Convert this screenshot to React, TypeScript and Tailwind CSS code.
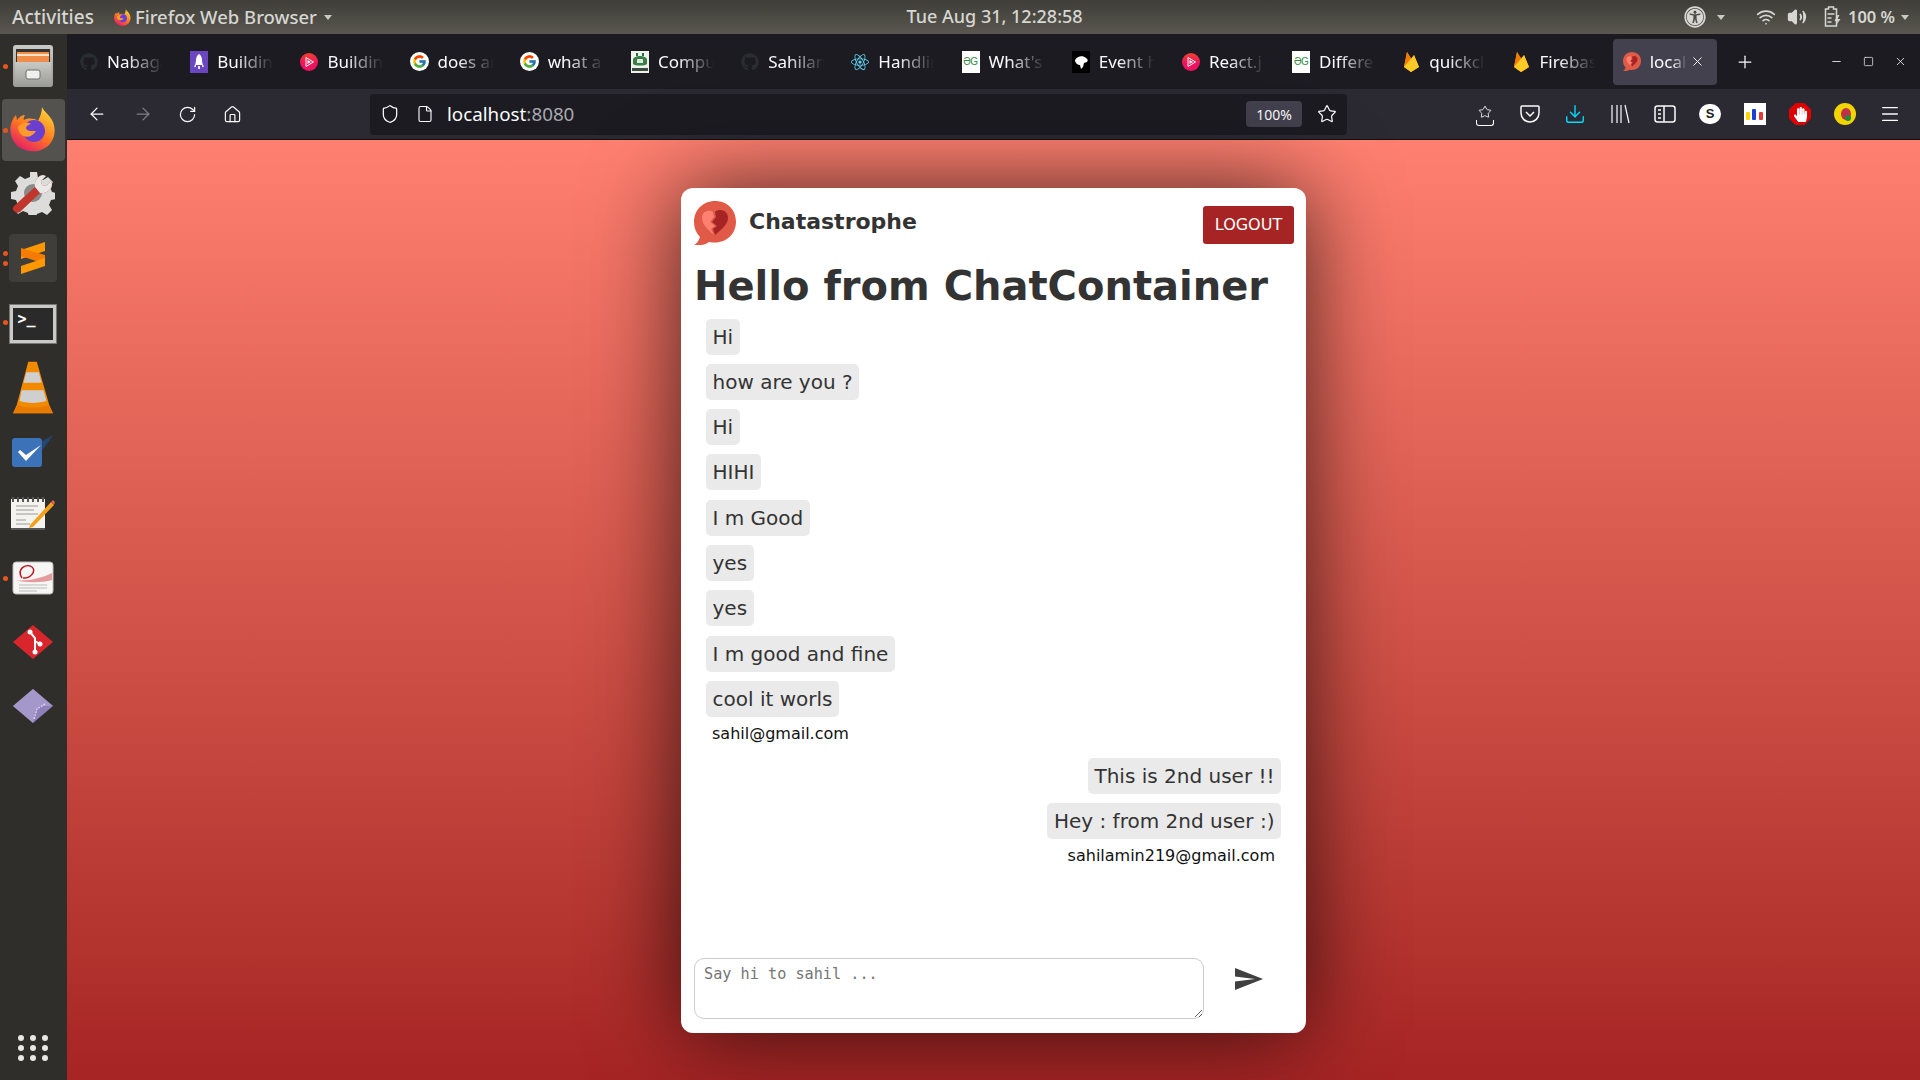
import { ArrowLeft, ArrowRight, RotateCw, Home, Shield, File, Star, Plus, X, Minus, Square, Menu, Download, Wifi, Volume2 } from 'lucide-react'
import { FaGithub, FaReact, FaHandPaper, FaUniversalAccess } from 'react-icons/fa'
import { FcGoogle } from 'react-icons/fc'

const UI_FONT = 'font-["Noto_Sans",sans-serif]'

function ChatLogo({ width, height }: { width: number; height: number }) {
  return (
    <svg width={width} height={height} viewBox="4 2 42 44">
      <path d="M25 2C13 2 4 11 4 23c0 6 2 11 6 15-1 4-4 7-6 8 5 1 11 0 15-3 2 .4 4 .6 6 .6 12 0 21-9 21-21S37 2 25 2z" fill="#e05a47" />
      <path d="M23 13c-4-3-11-1-11 6 0 6 6 12 12 17l-3-6 4-3-5-4 4-5z" fill="#ff8070" />
      <path d="M25 13c4-4 13-2 13 6 0 6-7 12-13 17l-2-6 4-3-5-4 4-5z" fill="#a62424" />
    </svg>
  )
}

function PlayCircle() {
  return (
    <svg width="18" height="18" viewBox="0 0 18 18">
      <defs>
        <linearGradient id="play" x1="0.500" y1="0" x2="0.500" y2="1">
          <stop offset="0" stopColor="#f0412f" />
          <stop offset="0.600" stopColor="#f0115f" />
        </linearGradient>
      </defs>
      <circle cx="9" cy="9" r="9" fill="url(#play)" />
      <path d="M6 4.500v9L13.500 9z" fill="none" stroke="#fff" strokeWidth="1" />
      <path d="M7.500 7v4L11 9z" fill="#fff" />
    </svg>
  )
}

function RocketIcon() {
  return (
    <svg width="18" height="22" viewBox="0 0 18 22">
      <rect width="18" height="22" fill="#6b46c1" />
      <path d="M9 3c3 2 3.500 6 3 11H6C5.500 9 6 5 9 3z" fill="#fff" />
      <path d="M6 11l-2 5h2zM12 11l2 5h-2zM8 15h2v3H8z" fill="#e9e3f7" />
    </svg>
  )
}

function GfgIcon() {
  return (
    <span className='flex h-[22px] w-[18px] items-center justify-center bg-white font-["Liberation_Sans",sans-serif] text-[10px] font-normal tracking-[-0.5px] text-[#2f8d46]'>
      ƏG
    </span>
  )
}

function OhioIcon() {
  return (
    <svg width="18" height="22" viewBox="0 0 18 22">
      <rect width="18" height="22" fill="#eef2ec" />
      <path d="M5 2h2v3H5zM11 2h2v3h-2z" fill="#2c6b3a" />
      <path d="M2 9c0-3 4-4 7-4s7 1 7 4v4c-2 2-12 2-14 0z" fill="#3b7d49" />
      <rect x="6" y="8" width="6" height="4" fill="#dfe8dc" />
      <rect x="1" y="17" width="16" height="3" fill="#3a4d3e" />
    </svg>
  )
}

function EventIcon() {
  return (
    <svg width="18" height="22" viewBox="0 0 18 22">
      <rect width="18" height="22" fill="#000" />
      <path d="M3 9c2-4 8-5 11-2 2 1 2 3 1 4l-3 1-1 4-2 2-1-4c-2 0-5-2-5-5z" fill="#fff" />
    </svg>
  )
}

function FirebaseIcon() {
  return (
    <svg width="18" height="22" viewBox="0 0 18 22">
      <path d="M2 16L5 1l5 8 2-5 5 12-8 5z" fill="#ffa000" />
      <path d="M2 16L5 1l5 8z" fill="#f57c00" />
      <path d="M2 16l10-12 5 12-8 5z" fill="#ffca28" />
    </svg>
  )
}

const tabs = [
  { title: 'Nabaga', icon: <FaGithub size={18} color="#2a2e33" /> },
  { title: 'Building', icon: <RocketIcon /> },
  { title: 'Building', icon: <PlayCircle /> },
  { title: 'does an', icon: <GoogleIcon /> },
  { title: 'what a', icon: <GoogleIcon /> },
  { title: 'Compu', icon: <OhioIcon /> },
  { title: 'Sahilan', icon: <FaGithub size={18} color="#2a2e33" /> },
  { title: 'Handlin', icon: <FaReact size={18} color="#61dafb" /> },
  { title: "What's", icon: <GfgIcon /> },
  { title: 'Event h', icon: <EventIcon /> },
  { title: 'React.j', icon: <PlayCircle /> },
  { title: 'Differe', icon: <GfgIcon /> },
  { title: 'quickcl', icon: <FirebaseIcon /> },
  { title: 'Firebas', icon: <FirebaseIcon /> },
]

function GoogleIcon() {
  return (
    <span className="flex h-[19px] w-[19px] items-center justify-center rounded-full bg-white">
      <FcGoogle size={15} />
    </span>
  )
}

function FilesIcon() {
  return (
    <svg width="42" height="44" viewBox="0 0 42 44">
      <defs>
        <linearGradient id="cab" x1="0" y1="0" x2="0" y2="1">
          <stop offset="0" stopColor="#c9c9c6" />
          <stop offset="1" stopColor="#9a9a97" />
        </linearGradient>
      </defs>
      <rect x="1" y="1" width="40" height="42" rx="3" fill="url(#cab)" />
      <rect x="4" y="5" width="34" height="14" fill="#36322d" />
      <rect x="5" y="8" width="32" height="10" fill="#f28c4a" />
      <rect x="5" y="10" width="32" height="2" fill="#fce3c7" />
      <rect x="3" y="18" width="36" height="25" fill="url(#cab)" />
      <rect x="14" y="26" width="14" height="9" rx="2" fill="#efefed" stroke="#6e6e6b" />
    </svg>
  )
}

function FirefoxIcon({ size }: { size: number }) {
  const id = size > 20 ? 'ffBig' : 'ffSmall'
  return (
    <svg width={size} height={size} viewBox="0 0 46 46">
      <defs>
        <linearGradient id={id} x1="0.800" y1="0" x2="0.200" y2="1">
          <stop offset="0" stopColor="#ffd83a" />
          <stop offset="0.500" stopColor="#ff7a1f" />
          <stop offset="1" stopColor="#e3166f" />
        </linearGradient>
      </defs>
      <path d="M32 1c2 5 8 8 11 15 3 8 2 17-4 23-8 8-21 8-30 2C2 36-1 27 1 18c1-4 3-7 5-9l1 5c2-3 5-5 8-5-1 2-2 4-1 5 4-2 10-2 14 1 2-4 4-9 4-14z" fill={`url(#${id})`} />
      <circle cx="24" cy="25" r="11" fill="#6a3fd0" />
      <path d="M8 21c4-5 10-5 13-3-3 1-5 2-5 4 1 4 7 3 10 3-3 5-8 7-13 5-3-2-5-5-5-9z" fill="#ff9a2e" />
    </svg>
  )
}

function ToolsIcon() {
  return (
    <svg width="44" height="44" viewBox="0 0 44 44">
      <path d="M19 1h7l1 6 5 2 5-3 5 5-3 5 2 5 4 1v6l-5 1-2 5 3 5-5 5-5-3-5 2-1 3h-7l-1-4-5-2-5 3-3-4 3-5-2-5-5-1v-7l5-1 2-5-3-5 5-5 5 3 5-2z" fill="#dcdcda" />
      <circle cx="22" cy="22" r="9" fill="#8a8a88" />
      <path d="M3 40c-2-2-1-4 0-5l21-19c-1-5 2-11 8-12l3 1-5 5 1 4 4 1 5-5 1 3c0 6-6 10-12 9L9 41c-2 1-4 1-6-1z" fill="#c0362c" />
      <path d="M24 16c-1-5 2-11 8-12l3 1-5 5 1 4 4 1 5-5 1 3c0 6-6 10-12 9z" fill="#e8e8e6" />
    </svg>
  )
}

function SublimeIcon() {
  return (
    <span className="flex h-[48px] w-[48px] items-center justify-center rounded-[4px] bg-[#3f3e3b]">
      <svg width="26" height="32" viewBox="0 0 26 32">
        <path d="M25 0v9L1 17V8z" fill="#ff9800" />
        <path d="M1 14l24 8v-9L1 6z" fill="#f57c00" />
        <path d="M1 24l24-8v8L1 32z" fill="#ff9800" />
      </svg>
    </span>
  )
}

function TerminalIcon() {
  return (
    <span className="flex h-[38px] w-[46px] items-start border-[3px] border-[#c9c9c7] bg-[#2a2a2a] px-[5px] pt-[1px] font-['DejaVu_Sans_Mono',monospace] text-[15px] font-bold leading-[20px] text-white outline outline-[1px] outline-[#777]">
      &gt;_
    </span>
  )
}

function VlcIcon() {
  return (
    <svg width="40" height="55" viewBox="0 0 42 56">
      <path d="M16 1h9l13 45 4 9H0l4-9z" fill="#f28a00" />
      <path d="M14 12h13l3 11H11zM9 31h23l3 11c-7 3-22 3-28 0z" fill="#cfcfcf" />
      <path d="M0 55l5-9c7 4 25 4 32 0l5 9z" fill="#e87a00" />
    </svg>
  )
}

function CheckIcon() {
  return (
    <svg width="44" height="34" viewBox="0 0 44 34">
      <path d="M28 8l14-8-8 12-5 4z" fill="#27456f" />
      <rect x="1" y="3" width="30" height="29" rx="3" fill="#3c72b8" />
      <path d="M7 17l2-2 6 5 15-10-15 16z" fill="#fff" />
    </svg>
  )
}

function NotesIcon() {
  return (
    <svg width="46" height="34" viewBox="0 0 46 34">
      <rect x="1" y="3" width="34" height="30" fill="#f4f3ee" />
      <rect x="1" y="32" width="34" height="2" fill="#555" />
      <path d="M3 1v5M8 1v5M13 1v5M18 1v5M23 1v5M28 1v5M33 1v5" stroke="#555" strokeWidth="2" />
      <path d="M6 10h22M6 14h18M6 18h22M6 24h10M6 28h14" stroke="#9a9a98" strokeWidth="1" />
      <path d="M20 29l-1 3 4-1L44 9l-3-3z" fill="#f4a01c" />
      <path d="M41 6l2-2 2 2-1 3z" fill="#e05a5a" />
    </svg>
  )
}

function EvinceIcon() {
  return (
    <svg width="42" height="34" viewBox="0 0 42 34">
      <rect x="1" y="1" width="40" height="32" rx="3" fill="#f6f6f4" stroke="#bbb" />
      <path d="M2 19c12 2 28-2 38-7v7c-10 3-26 3-38 0z" fill="#e59a9c" />
      <path d="M10 17C4 8 14 2 20 6c5 4-2 12-9 11" fill="none" stroke="#cc0f1a" strokeWidth="1.500" />
      <path d="M7 24h28M7 27h28M7 30h18" stroke="#bbb" />
    </svg>
  )
}

function GitIcon() {
  return (
    <svg width="42" height="34" viewBox="0 0 42 34">
      <path d="M21 0l20 17-20 17L1 17z" fill="#d9252c" />
      <path d="M18 7l5 6v13M23 16l5 3" stroke="#fff" strokeWidth="2" fill="none" />
      <circle cx="18" cy="7" r="2.500" fill="#fff" />
      <circle cx="28" cy="19" r="2.500" fill="#fff" />
      <circle cx="23" cy="27" r="2.500" fill="#fff" />
    </svg>
  )
}

function DiamondIcon() {
  return (
    <svg width="42" height="34" viewBox="0 0 42 34">
      <path d="M21 0l20 17-20 17L1 17z" fill="#8f80ba" />
      <path d="M21 0l20 17H28l-5 5-2 12L1 17z" fill="#b3a7d6" opacity="0.600" />
      <path d="M22 30l3-10 8-5" stroke="#d5cfe8" strokeWidth="1.500" fill="none" strokeDasharray="2 1" />
    </svg>
  )
}

const dockItems = [
  { icon: <FilesIcon />, dots: 1, shift: '' },
  { icon: <FirefoxIcon size={46} />, dots: 1, active: true, shift: '-mt-[3px]' },
  { icon: <ToolsIcon />, dots: 0, shift: '-mt-[3px]' },
  { icon: <SublimeIcon />, dots: 2, shift: '' },
  { icon: <TerminalIcon />, dots: 1, shift: 'mt-[3px]' },
  { icon: <VlcIcon />, dots: 0, shift: 'mt-[2px]' },
  { icon: <CheckIcon />, dots: 0, shift: 'mt-[3px]' },
  { icon: <NotesIcon />, dots: 0, shift: '-mt-[2px]' },
  { icon: <EvinceIcon />, dots: 1, shift: '-mt-[1px]' },
  { icon: <GitIcon />, dots: 0, shift: '-mt-[1px]' },
  { icon: <DiamondIcon />, dots: 0, shift: '-mt-[1px]' },
]

function Dock() {
  return (
    <aside className="flex w-[67px] shrink-0 flex-col bg-[#302e2b]">
      {dockItems.map((item, i) => (
        <div key={i} className="relative flex h-[64px] shrink-0 items-center justify-center pr-[2px]">
          {item.active && <div className="absolute inset-x-[2px] inset-y-[1px] rounded-[4px] bg-[#54524e]" />}
          <div className={`relative flex items-center justify-center ${item.shift}`}>{item.icon}</div>
          {item.dots > 0 && (
            <div className="absolute left-[3px] top-0 flex h-full flex-col justify-center gap-[5px]">
              {Array.from({ length: item.dots }).map((_, d) => (
                <span key={d} className="h-[5px] w-[5px] rounded-full bg-[#e95420]" />
              ))}
            </div>
          )}
        </div>
      ))}
      <div className="mb-[19px] mt-auto grid grid-cols-3 justify-items-center gap-x-[6px] gap-y-[4px] self-center pr-[2px]">
        {Array.from({ length: 9 }).map((_, i) => (
          <span key={i} className="h-[6px] w-[6px] rounded-full bg-[#e8e8e6]" />
        ))}
      </div>
    </aside>
  )
}

function TopBar() {
  return (
    <header className={`relative flex h-[34px] shrink-0 items-center justify-between bg-gradient-to-b from-[#3e3d38] to-[#59574e] pl-[12px] pr-[11px] text-[18px] font-medium text-[#d6d6d2] ${UI_FONT}`}>
      <div className="flex items-center">
        <span className="text-[19px]">Activities</span>
        <span className="ml-[20px] flex items-center gap-[4px] text-[18.500px]">
          <FirefoxIcon size={17} />
          Firefox Web Browser
          <span className="ml-[3px] h-0 w-0 border-x-[4px] border-t-[5px] border-x-transparent border-t-[#c9c9c5]" />
        </span>
      </div>
      <span className="absolute left-[51.800%] top-[3px] -translate-x-1/2">Tue Aug 31, 12:28:58</span>
      <div className="flex items-center">
        <FaUniversalAccess size={22} color="#d6d6d2" />
        <span className="ml-[11px] h-0 w-0 border-x-[4px] border-t-[5px] border-x-transparent border-t-[#c9c9c5]" />
        <Wifi size={20} className="ml-[31px]" />
        <Volume2 size={20} className="ml-[11px]" fill="#d6d6d2" />
        <svg width="18" height="22" viewBox="0 0 17 22" className="ml-[16px]" fill="none" stroke="#d6d6d2" strokeWidth="1.500">
          <path d="M5 1h5v2h3v17H2V3h3zM4 8h7M4 12h4M4 16h4" />
          <path d="M14 9l-3 6h3l-2 5 5-7h-3l2-4z" fill="#d6d6d2" stroke="none" />
        </svg>
        <span className="ml-[7px] text-[16.500px] font-semibold">100 %</span>
        <span className="ml-[6px] h-0 w-0 border-x-[4px] border-t-[5px] border-x-transparent border-t-[#c9c9c5]" />
      </div>
    </header>
  )
}

function TabBar() {
  return (
    <div className={`flex h-[55px] shrink-0 items-center bg-[#1c1b22] pl-[3px] text-[17px] text-[#fbfbfe] ${UI_FONT}`}>
      <div className="flex gap-[6.200px]">
        {tabs.map((tab, i) => (
          <div key={i} className="flex h-[46px] w-[104px] items-center gap-[8px] pl-[9px]">
            <span className="flex w-[20px] shrink-0 justify-center">{tab.icon}</span>
            <span className="w-[56px] overflow-hidden whitespace-nowrap [mask-image:linear-gradient(to_right,black_35%,transparent)]">{tab.title}</span>
          </div>
        ))}
        <div className="flex h-[46px] w-[104px] items-center gap-[8px] rounded-[4px] bg-[#42414d] pl-[9px]">
          <span className="flex w-[20px] shrink-0 justify-center">
            <ChatLogo width={18} height={19} />
          </span>
          <span className="w-[37px] overflow-hidden whitespace-nowrap [mask-image:linear-gradient(to_right,black_60%,transparent)]">localhost</span>
          <X size={15} strokeWidth={1.500} className="-ml-[5px]" />
        </div>
      </div>
      <Plus size={20} strokeWidth={1.500} className="ml-[18px]" />
      <div className="ml-auto flex items-center gap-[20px] pr-[13px]">
        <Minus size={13} strokeWidth={1.500} />
        <Square size={11} strokeWidth={1.500} />
        <X size={13} strokeWidth={1.500} />
      </div>
    </div>
  )
}

function ToolBar() {
  return (
    <div className={`flex h-[51px] shrink-0 items-center border-b border-[#111] bg-[#2b2a33] text-[#fbfbfe] ${UI_FONT}`}>
      <div className="flex w-[303px] items-center gap-[25.500px] pl-[20px]">
        <ArrowLeft size={20} strokeWidth={1.500} />
        <ArrowRight size={20} strokeWidth={1.500} className="opacity-40" />
        <RotateCw size={19} strokeWidth={1.500} />
        <Home size={19} strokeWidth={1.500} />
      </div>
      <div className="flex h-[41px] w-[977px] items-center rounded-[4px] bg-[#1c1b22] pl-[10px] pr-[10px]">
        <Shield size={20} strokeWidth={1.500} />
        <File size={18} strokeWidth={1.500} className="ml-[16px]" />
        <span className="ml-[13px] text-[18.800px]">
          localhost<span className="text-[#a8a8ad]">:8080</span>
        </span>
        <span className="ml-auto flex h-[26px] w-[56px] items-center justify-center rounded-[4px] bg-[#42414d] text-[14px]">100%</span>
        <Star size={20} strokeWidth={1.500} className="ml-[15px]" />
      </div>
      <div className="ml-[127px] flex items-center gap-[23px]">
        <span className="relative flex w-[22px] justify-center">
          <Star size={14} strokeWidth={1.500} className="mb-[4px]" />
          <span className="absolute bottom-[-3px] h-[6px] w-[18px] rounded-b-[3px] border border-t-0 border-white" />
        </span>
        <svg width="22" height="22" viewBox="0 0 22 22" fill="none" stroke="#fbfbfe" strokeWidth="1.500">
          <path d="M3 3h16a1 1 0 0 1 1 1v6a9 9 0 0 1-18 0V4a1 1 0 0 1 1-1z" />
          <path d="M7 9l4 4 4-4" />
        </svg>
        <Download size={22} strokeWidth={1.500} color="#00ddff" />
        <svg width="22" height="22" viewBox="0 0 22 22" stroke="#fbfbfe" strokeWidth="1.200">
          <path d="M3 2v18M8 2v18M12 2v18M16 2l4 18" />
        </svg>
        <svg width="22" height="22" viewBox="0 0 22 22" fill="none" stroke="#fbfbfe" strokeWidth="1.500">
          <rect x="1" y="3" width="20" height="16" rx="2.500" />
          <path d="M10 3v16M4 7h3M4 11h3M4 15h3" />
        </svg>
        <span className="flex h-[20px] w-[22px] items-center justify-center rounded-full bg-white font-['Liberation_Sans',sans-serif] text-[13px] font-bold text-[#222]">S</span>
        <svg width="22" height="22" viewBox="0 0 22 22">
          <rect width="22" height="22" fill="#fff" />
          <rect x="2" y="9" width="4" height="8" rx="1" fill="#ffd500" />
          <rect x="8" y="6" width="4" height="11" rx="1" fill="#1a3fd4" />
          <rect x="15" y="9" width="4" height="8" rx="1" fill="#e53935" />
        </svg>
        <span className="flex h-[22px] w-[22px] items-center justify-center bg-[#e00000] [clip-path:polygon(30%_0,70%_0,100%_30%,100%_70%,70%_100%,30%_100%,0_70%,0_30%)]">
          <FaHandPaper size={15} color="#fff" />
        </span>
        <svg width="22" height="22" viewBox="0 0 22 22">
          <circle cx="11" cy="11" r="11" fill="#f2d500" />
          <ellipse cx="12" cy="11" rx="5" ry="6" fill="#c0304a" />
          <circle cx="14" cy="15" r="3" fill="#1e8a3c" />
        </svg>
        <Menu size={22} strokeWidth={1.500} />
      </div>
    </div>
  )
}

const theirMessages = ['Hi', 'how are you ?', 'Hi', 'HIHI', 'I m Good', 'yes', 'yes', 'I m good and fine', 'cool it worls']
const myMessages = ['This is 2nd user !!', 'Hey : from 2nd user :)']

function Bubble({ text }: { text: string }) {
  return (
    <div className="mb-[9.300px] flex h-[36px] items-center rounded-[5px] bg-[#eaeaea] px-[6.500px] text-[20px] text-[#333]">
      {text}
    </div>
  )
}

function ChatCard() {
  return (
    <div className="flex h-[845px] w-[625px] flex-col rounded-[12px] bg-white pb-[14px] pl-[13px] pr-[12px] pt-[13px] font-['DejaVu_Sans',sans-serif] text-[#333] shadow-[0_0_90px_rgba(0,0,0,0.700)]">
      <div className="flex items-start justify-between">
        <div className="flex items-center gap-[13px]">
          <ChatLogo width={42} height={44} />
          <span className="mb-[3px] text-[22px] font-bold">Chatastrophe</span>
        </div>
        <button className="mt-[5px] h-[38px] w-[91px] rounded-[3px] bg-[#a62424] text-[16px] text-white">LOGOUT</button>
      </div>
      <h1 className="mt-[18px] text-[40px] font-bold leading-[47px]">Hello from ChatContainer</h1>
      <div className="mt-[9px] flex min-h-0 flex-1 flex-col pl-[12px] pr-[13px]">
        <div className="flex flex-col items-start">
          {theirMessages.map((m, i) => (
            <Bubble key={i} text={m} />
          ))}
          <span className="-mt-[2px] pl-[6px] text-[16px] leading-[19px] text-[#111]">sahil@gmail.com</span>
        </div>
        <div className="mt-[15px] flex flex-col items-end">
          {myMessages.map((m, i) => (
            <Bubble key={i} text={m} />
          ))}
          <span className="-mt-[3px] pr-[6px] text-[16px] leading-[19px] text-[#111]">sahilamin219@gmail.com</span>
        </div>
      </div>
      <div className="flex items-start">
        <textarea
          placeholder="Say hi to sahil ..."
          className="h-[61px] w-[510px] rounded-[10px] border border-[#ccc] px-[9px] py-[6px] font-['DejaVu_Sans_Mono',monospace] text-[15.200px] leading-[18px] outline-none placeholder:text-[#757575]"
        />
        <button className="ml-[31px] mt-[10px]">
          <svg width="28" height="22" viewBox="48 64 416 384" fill="#404040" preserveAspectRatio="none">
            <path d="M48 448l416-192L48 64v149.333L346 256 48 298.667z" />
          </svg>
        </button>
      </div>
    </div>
  )
}

export default function App() {
  return (
    <div className="flex h-screen w-screen flex-col overflow-hidden">
      <TopBar />
      <div className="flex min-h-0 flex-1">
        <Dock />
        <div className="flex min-w-0 flex-1 flex-col">
          <TabBar />
          <ToolBar />
          <main className="flex min-h-0 flex-1 items-center justify-center bg-gradient-to-b from-[#ff8070] to-[#a62424]">
            <ChatCard />
          </main>
        </div>
      </div>
    </div>
  )
}
